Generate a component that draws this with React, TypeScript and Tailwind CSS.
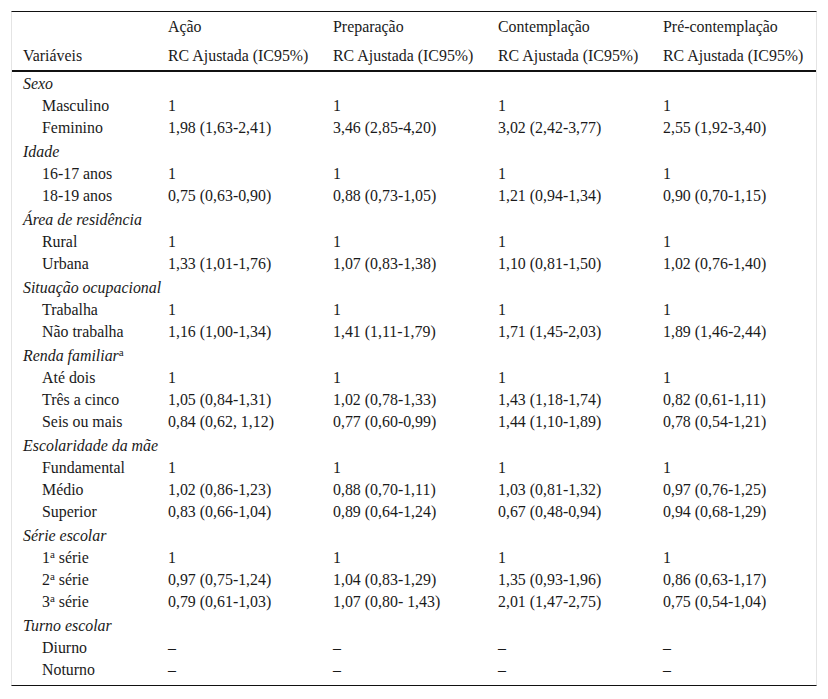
const groups: { title: React.ReactNode; rows: { label: React.ReactNode; values: string[] }[] }[] = [
  {
    title: "Sexo",
    rows: [
      { label: "Masculino", values: ["1", "1", "1", "1"] },
      { label: "Feminino", values: ["1,98 (1,63-2,41)", "3,46 (2,85-4,20)", "3,02 (2,42-3,77)", "2,55 (1,92-3,40)"] },
    ],
  },
  {
    title: "Idade",
    rows: [
      { label: "16-17 anos", values: ["1", "1", "1", "1"] },
      { label: "18-19 anos", values: ["0,75 (0,63-0,90)", "0,88 (0,73-1,05)", "1,21 (0,94-1,34)", "0,90 (0,70-1,15)"] },
    ],
  },
  {
    title: "Área de residência",
    rows: [
      { label: "Rural", values: ["1", "1", "1", "1"] },
      { label: "Urbana", values: ["1,33 (1,01-1,76)", "1,07 (0,83-1,38)", "1,10 (0,81-1,50)", "1,02 (0,76-1,40)"] },
    ],
  },
  {
    title: "Situação ocupacional",
    rows: [
      { label: "Trabalha", values: ["1", "1", "1", "1"] },
      { label: "Não trabalha", values: ["1,16 (1,00-1,34)", "1,41 (1,11-1,79)", "1,71 (1,45-2,03)", "1,89 (1,46-2,44)"] },
    ],
  },
  {
    title: (
      <>
        Renda familiar<sup className="text-[11px] not-italic">a</sup>
      </>
    ),
    rows: [
      { label: "Até dois", values: ["1", "1", "1", "1"] },
      { label: "Três a cinco", values: ["1,05 (0,84-1,31)", "1,02 (0,78-1,33)", "1,43 (1,18-1,74)", "0,82 (0,61-1,11)"] },
      { label: "Seis ou mais", values: ["0,84 (0,62, 1,12)", "0,77 (0,60-0,99)", "1,44 (1,10-1,89)", "0,78 (0,54-1,21)"] },
    ],
  },
  {
    title: "Escolaridade da mãe",
    rows: [
      { label: "Fundamental", values: ["1", "1", "1", "1"] },
      { label: "Médio", values: ["1,02 (0,86-1,23)", "0,88 (0,70-1,11)", "1,03 (0,81-1,32)", "0,97 (0,76-1,25)"] },
      { label: "Superior", values: ["0,83 (0,66-1,04)", "0,89 (0,64-1,24)", "0,67 (0,48-0,94)", "0,94 (0,68-1,29)"] },
    ],
  },
  {
    title: "Série escolar",
    rows: [
      { label: <>1<sup className="text-[11px]">a</sup> série</>, values: ["1", "1", "1", "1"] },
      { label: <>2<sup className="text-[11px]">a</sup> série</>, values: ["0,97 (0,75-1,24)", "1,04 (0,83-1,29)", "1,35 (0,93-1,96)", "0,86 (0,63-1,17)"] },
      { label: <>3<sup className="text-[11px]">a</sup> série</>, values: ["0,79 (0,61-1,03)", "1,07 (0,80- 1,43)", "2,01 (1,47-2,75)", "0,75 (0,54-1,04)"] },
    ],
  },
  {
    title: "Turno escolar",
    rows: [
      { label: "Diurno", values: ["–", "–", "–", "–"] },
      { label: "Noturno", values: ["–", "–", "–", "–"] },
    ],
  },
];

const cols = "grid grid-cols-[145px_165px_165px_165px_1fr] pl-[11px]";

export default function App() {
  return (
    <div className="bg-white w-[828px] h-[699px] pt-[11px] pl-[11px] text-[#1a1a1a] [font-family:'Liberation_Serif','Times_New_Roman',serif] text-[15.9px]">
      <div className="w-[806px] border-x border-[#e4e4e4] border-t border-t-[#111] pb-[5px] border-b border-b-[#111]">
        {/* header */}
        <div className={`${cols} h-[30px] items-center`}>
          <div />
          <div>Ação</div>
          <div>Preparação</div>
          <div>Contemplação</div>
          <div>Pré-contemplação</div>
        </div>
        <div className={`${cols} h-[30px] items-center border-b-2 border-[#111]`}>
          <div>Variáveis</div>
          <div>RC Ajustada (IC95%)</div>
          <div>RC Ajustada (IC95%)</div>
          <div>RC Ajustada (IC95%)</div>
          <div>RC Ajustada (IC95%)</div>
        </div>

        {groups.map((g, gi) => (
          <div key={gi} className={gi === 0 ? "" : "mt-[2px]"}>
            <div className={`${cols} h-[22px] items-center italic`}>
              <div className="col-span-5">{g.title}</div>
            </div>
            {g.rows.map((r, ri) => (
              <div key={ri} className={`${cols} h-[22px] items-center`}>
                <div className="pl-[19px]">{r.label}</div>
                {r.values.map((v, vi) => (
                  <div key={vi}>{v}</div>
                ))}
              </div>
            ))}
          </div>
        ))}
      </div>
    </div>
  );
}
